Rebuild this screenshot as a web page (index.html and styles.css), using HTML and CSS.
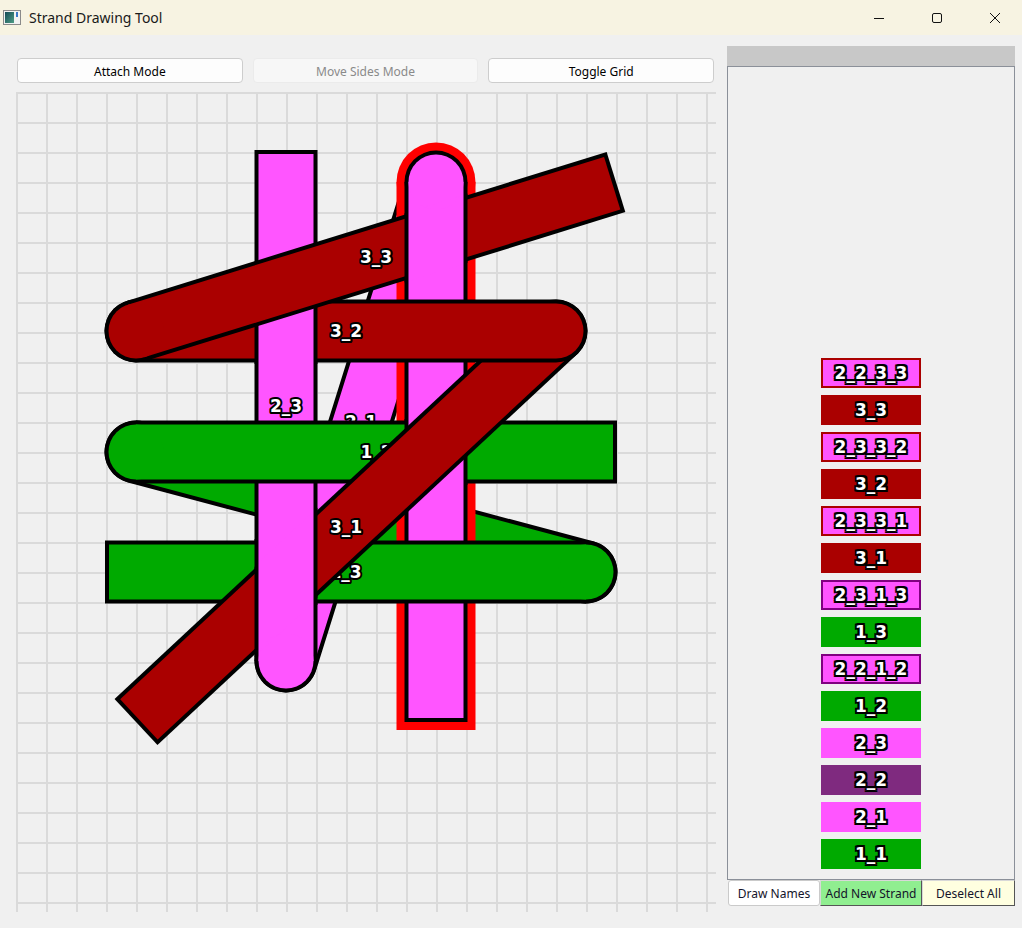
FILE: index.html
```html
<!DOCTYPE html>
<html>
<head>
<meta charset="utf-8">
<link rel="stylesheet" href="styles.css">
</head>
<body>
<div class="titlebar">
  <svg class="app-icon" width="19" height="16" viewBox="0 0 19 16">
    <defs>
      <linearGradient id="ig" x1="0" y1="0" x2="1" y2="1">
        <stop offset="0" stop-color="#134a55"/>
        <stop offset="1" stop-color="#4f9d86"/>
      </linearGradient>
    </defs>
    <rect x="0.5" y="0.5" width="17" height="14" fill="#f2f2f2" stroke="#8a8a8a"/>
    <rect x="2" y="2" width="9" height="11" fill="url(#ig)"/>
    <rect x="13" y="2" width="2" height="5" fill="#3a78c8"/>
  </svg>
  <span class="title">Strand Drawing Tool</span>
  <div class="caption">
    <div class="cap-btn"><svg width="12" height="12" viewBox="0 0 12 12"><path d="M1 6.5 H11" stroke="#111" stroke-width="1"/></svg></div>
    <div class="cap-btn"><svg width="12" height="12" viewBox="0 0 12 12"><rect x="1.5" y="1.5" width="9" height="9" rx="1.5" fill="none" stroke="#111" stroke-width="1"/></svg></div>
    <div class="cap-btn"><svg width="12" height="12" viewBox="0 0 12 12"><path d="M1 1 L11 11 M11 1 L1 11" stroke="#111" stroke-width="1"/></svg></div>
  </div>
</div>
<div class="main">
  <div class="left">
    <div class="toolbar">
      <div class="tbtn">Attach Mode</div>
      <div class="tbtn disabled">Move Sides Mode</div>
      <div class="tbtn">Toggle Grid</div>
    </div>
    <div class="canvas">
      <svg width="700" height="820" viewBox="16 92 700 820">
        <defs>
          <pattern id="grid" x="16" y="92" width="30" height="30" patternUnits="userSpaceOnUse">
            <path d="M1 0 V30 M0 1 H30" stroke="#dadada" stroke-width="2" fill="none"/>
          </pattern>
          <g id="b22">
            <line x1="436" y1="182" x2="436" y2="722" stroke="#000" stroke-width="63"/>
            <circle cx="436" cy="182" r="31.5" fill="#000"/>
            <line x1="436" y1="182" x2="436" y2="718" stroke="#ff55ff" stroke-width="55"/>
            <circle cx="436" cy="182" r="27.5" fill="#ff55ff"/>
          </g>
          <g id="b23">
            <line x1="286" y1="661" x2="286" y2="150" stroke="#000" stroke-width="63"/>
            <circle cx="286" cy="661" r="31.5" fill="#000"/>
            <line x1="286" y1="661" x2="286" y2="154" stroke="#ff55ff" stroke-width="55"/>
            <circle cx="286" cy="661" r="27.5" fill="#ff55ff"/>
          </g>
          <mask id="m12" maskUnits="userSpaceOnUse" x="16" y="92" width="700" height="820">
            <line x1="136" y1="452" x2="618" y2="452" stroke="#fff" stroke-width="66"/>
            <circle cx="136" cy="452" r="33" fill="#fff"/>
          </mask>
          <mask id="m13" maskUnits="userSpaceOnUse" x="16" y="92" width="700" height="820">
            <line x1="586" y1="572" x2="104" y2="572" stroke="#fff" stroke-width="66"/>
            <circle cx="586" cy="572" r="33" fill="#fff"/>
          </mask>
          <mask id="m31" maskUnits="userSpaceOnUse" x="16" y="92" width="700" height="820">
            <line x1="556" y1="331" x2="135" y2="723" stroke="#fff" stroke-width="66"/>
            <circle cx="556" cy="331" r="33" fill="#fff"/>
          </mask>
          <mask id="m32" maskUnits="userSpaceOnUse" x="16" y="92" width="700" height="820">
            <line x1="136" y1="331" x2="556" y2="331" stroke="#fff" stroke-width="66" stroke-linecap="round"/>
          </mask>
          <mask id="m33" maskUnits="userSpaceOnUse" x="16" y="92" width="700" height="820">
            <line x1="136" y1="331" x2="617" y2="182" stroke="#fff" stroke-width="66"/>
            <circle cx="136" cy="331" r="33" fill="#fff"/>
          </mask>
        </defs>
        <rect x="16" y="92" width="700" height="820" fill="#f0f0f0"/>
        <rect x="16" y="92" width="700" height="820" fill="url(#grid)"/>

        <!-- 1_1 -->
        <g>
          <line x1="136" y1="452" x2="586" y2="572" stroke="#000" stroke-width="63" stroke-linecap="round"/>
          <line x1="136" y1="452" x2="586" y2="572" stroke="#00aa00" stroke-width="55" stroke-linecap="round"/>
        </g>
        <!-- 2_1 -->
        <g>
          <line x1="436" y1="182" x2="286" y2="661" stroke="#000" stroke-width="63" stroke-linecap="round"/>
          <line x1="436" y1="182" x2="286" y2="661" stroke="#ff55ff" stroke-width="55" stroke-linecap="round"/>
          <text class="lbl" x="361" y="421.5">2_1</text>
        </g>
        <!-- 2_2 (selected) -->
        <g>
          <line x1="436" y1="182" x2="436" y2="730" stroke="#ff0000" stroke-width="79"/>
          <circle cx="436" cy="182" r="39.5" fill="#ff0000"/>
          <use href="#b22"/>
        </g>
        <!-- 2_3 -->
        <g>
          <use href="#b23"/>
          <text class="lbl" x="286" y="405.5">2_3</text>
        </g>
        <!-- 1_2 -->
        <g>
          <line x1="136" y1="452" x2="617" y2="452" stroke="#000" stroke-width="63"/>
          <circle cx="136" cy="452" r="31.5" fill="#000"/>
          <line x1="136" y1="452" x2="613" y2="452" stroke="#00aa00" stroke-width="55"/>
          <circle cx="136" cy="452" r="27.5" fill="#00aa00"/>
          <text class="lbl" x="376.5" y="452">1_2</text>
        </g>
        <!-- mask 2_2_1_2 -->
        <g mask="url(#m12)"><use href="#b22"/></g>
        <!-- 1_3 -->
        <g>
          <line x1="586" y1="572" x2="105" y2="572" stroke="#000" stroke-width="63"/>
          <circle cx="586" cy="572" r="31.5" fill="#000"/>
          <line x1="586" y1="572" x2="109" y2="572" stroke="#00aa00" stroke-width="55"/>
          <circle cx="586" cy="572" r="27.5" fill="#00aa00"/>
          <text class="lbl" x="345.5" y="572">1_3</text>
        </g>
        <!-- mask 2_3_1_3 -->
        <g mask="url(#m13)"><use href="#b23"/></g>
        <!-- 3_1 -->
        <g>
          <line x1="556" y1="331" x2="136" y2="722" stroke="#000" stroke-width="63"/>
          <circle cx="556" cy="331" r="31.5" fill="#000"/>
          <line x1="556" y1="331" x2="138.9" y2="719.3" stroke="#aa0000" stroke-width="55"/>
          <circle cx="556" cy="331" r="27.5" fill="#aa0000"/>
          <text class="lbl" x="346" y="526.5">3_1</text>
        </g>
        <!-- mask 2_3_3_1 -->
        <g mask="url(#m31)"><use href="#b23"/></g>
        <!-- 3_2 -->
        <g>
          <line x1="136" y1="331" x2="556" y2="331" stroke="#000" stroke-width="63" stroke-linecap="round"/>
          <line x1="136" y1="331" x2="556" y2="331" stroke="#aa0000" stroke-width="55" stroke-linecap="round"/>
          <text class="lbl" x="346" y="331">3_2</text>
        </g>
        <!-- mask 2_3_3_2 -->
        <g mask="url(#m32)"><use href="#b23"/></g>
        <!-- 3_3 -->
        <g>
          <line x1="136" y1="331" x2="616" y2="182" stroke="#000" stroke-width="63"/>
          <circle cx="136" cy="331" r="31.5" fill="#000"/>
          <line x1="136" y1="331" x2="612.2" y2="183.2" stroke="#aa0000" stroke-width="55"/>
          <circle cx="136" cy="331" r="27.5" fill="#aa0000"/>
          <text class="lbl" x="376" y="256.5">3_3</text>
        </g>
        <!-- mask 2_2_3_3 -->
        <g mask="url(#m33)"><use href="#b22"/></g>
      </svg>
    </div>
  </div>
  <div class="right">
    <div class="panel-head"></div>
    <div class="strand-list">
      <div class="item p mr">2_2_3_3</div>
      <div class="item r">3_3</div>
      <div class="item p mr">2_3_3_2</div>
      <div class="item r">3_2</div>
      <div class="item p mr">2_3_3_1</div>
      <div class="item r">3_1</div>
      <div class="item p mv">2_3_1_3</div>
      <div class="item g">1_3</div>
      <div class="item p mv">2_2_1_2</div>
      <div class="item g">1_2</div>
      <div class="item p">2_3</div>
      <div class="item v">2_2</div>
      <div class="item p">2_1</div>
      <div class="item g">1_1</div>
    </div>
    <div class="bottom-bar">
      <div class="bbtn b-draw">Draw Names</div>
      <div class="bbtn b-add">Add New Strand</div>
      <div class="bbtn b-desel">Deselect All</div>
    </div>
  </div>
</div>
</body>
</html>
```
FILE: styles.css
```css
* { box-sizing: border-box; }
html, body { margin: 0; padding: 0; }
body {
  width: 1022px;
  height: 928px;
  overflow: hidden;
  background: #f0f0f0;
  font-family: "Noto Sans", "Open Sans", sans-serif;
}
.titlebar {
  height: 35px;
  background: #f7f3e2;
  display: flex;
  align-items: center;
  overflow: hidden;
}
.app-icon { margin-left: 3px; margin-top: 1px; display: block; }
.title { margin-left: 7px; font-size: 14px; color: #1a1a1a; }
.caption { margin-left: auto; margin-right: -2px; display: flex; }
.cap-btn {
  width: 58px;
  height: 35px;
  display: flex;
  align-items: center;
  justify-content: center;
}
.cap-btn svg { display: block; }
.main { display: flex; padding-left: 16px; gap: 11px; }
.left { width: 700px; padding-top: 23px; }
.toolbar {
  display: grid;
  grid-template-columns: repeat(3, 1fr);
  gap: 10px;
  padding: 0 2px 0 1px;
  height: 25px;
}
.tbtn {
  border: 1px solid #cdcdcd;
  border-radius: 4px;
  background: #fdfdfd;
  font-size: 12px;
  display: flex;
  align-items: center;
  justify-content: center;
  color: #000;
  padding-top: 1px;
}
.tbtn.disabled { background: #f7f7f7; border-color: #ebebeb; color: #8a8a8a; }
.canvas { margin-top: 9px; width: 700px; height: 820px; }
.canvas svg { display: block; }
.lbl {
  font-family: "DejaVu Sans", sans-serif;
  font-weight: bold;
  font-size: 17px;
  fill: #fff;
  stroke: #000;
  stroke-width: 4px;
  stroke-linejoin: round;
  paint-order: stroke fill;
  text-anchor: middle;
  dominant-baseline: central;
}
.right { width: 288px; padding-top: 11px; display: flex; flex-direction: column; }
.panel-head { height: 20px; background: #c8c8c8; }
.strand-list {
  height: 814px;
  border: 1px solid #8b9099;
  display: flex;
  flex-direction: column;
  align-items: center;
  justify-content: flex-end;
  gap: 7px;
  padding-bottom: 10px;
}
.item {
  width: 100px;
  height: 30px;
  flex: none;
  display: flex;
  align-items: center;
  justify-content: center;
  font-family: "DejaVu Sans", sans-serif;
  font-weight: bold;
  font-size: 17px;
  color: #fff;
  text-shadow:
    -2px -2px 0 #000, 2px -2px 0 #000, -2px 2px 0 #000, 2px 2px 0 #000,
    0 -2px 0 #000, 0 2px 0 #000, -2px 0 0 #000, 2px 0 0 #000;
}
.item.p { background: #ff55ff; }
.item.r { background: #aa0000; }
.item.g { background: #00aa00; }
.item.v { background: #7f2a7f; }
.item.mr { border: 2px solid #aa0000; }
.item.mv { border: 2px solid #800080; }
.bottom-bar { display: flex; height: 26px; padding-left: 1px; }
.bbtn {
  font-size: 12px;
  display: flex;
  align-items: center;
  justify-content: center;
  color: #14142a;
  white-space: nowrap;
}
.b-draw { width: 92px; background: #fff; border: 1px solid #cacaca; border-radius: 3px; }
.b-add {
  width: 102px;
  background: #90ee90;
  border-top: 1px solid #d8d8d8;
  border-left: 1px solid #d8d8d8;
  border-right: 1px solid #555;
  border-bottom: 1px solid #555;
}
.b-desel {
  width: 93px;
  background: #ffffe0;
  border-top: 1px solid #d8d8d8;
  border-left: 1px solid #d8d8d8;
  border-right: 1px solid #555;
  border-bottom: 1px solid #555;
}
```
